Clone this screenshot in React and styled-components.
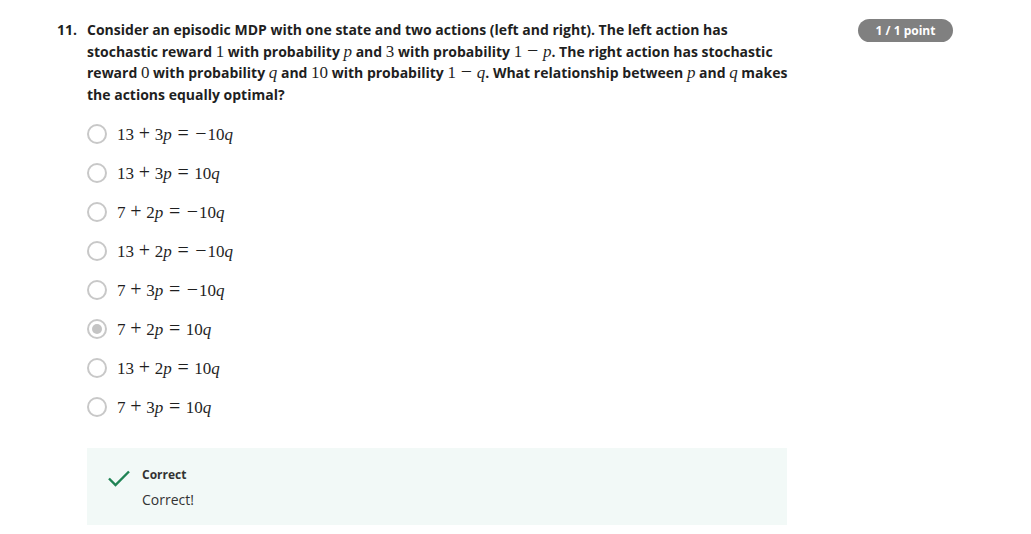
import React from 'react';
import styled, { createGlobalStyle } from 'styled-components';

const GlobalStyle = createGlobalStyle`
  body {
    margin: 0;
    background: #fff;
    font-family: 'Open Sans', 'Liberation Sans', sans-serif;
    color: #1f1f1f;
  }
`;

const Page = styled.div`
  display: flex;
  align-items: flex-start;
  padding: 18px 78px 0 57px;
`;

const Number = styled.div`
  width: 30px;
  flex-shrink: 0;
  font-size: 14px;
  font-weight: 700;
  line-height: 21.5px;
  padding-top: 1px;
`;

const Body = styled.div`
  width: 700px;
`;

const Prompt = styled.div`
  width: 708px;
  font-size: 14px;
  font-weight: 700;
  line-height: 21.5px;
  padding-top: 1px;
`;

// math pieces, KaTeX-like sizing on a serif face
const M = styled.span`
  font-family: 'Liberation Serif', 'DejaVu Serif', serif;
  font-weight: 400;
  font-size: 17px;
  line-height: 0;
  font-style: ${(p) => (p.$i ? 'italic' : 'normal')};
`;

const Op = styled.span`
  display: inline-block;
  width: 13.2px;
  text-align: center;
  font-family: 'Liberation Serif', 'DejaVu Serif', serif;
  font-weight: 400;
  font-size: 20px;
  line-height: 0;
  margin: 0 ${(p) => (p.$unary ? '0' : p.$rel ? '4.7px' : '3.8px')};
`;

const Options = styled.div`
  display: flex;
  flex-direction: column;
  gap: 19px;
  margin-top: 19px;
`;

const Option = styled.label`
  display: flex;
  align-items: center;
  gap: 10px;
  height: 20px;
`;

const Radio = styled.span`
  width: 16px;
  height: 16px;
  border-radius: 50%;
  border: 2px solid #c8c8c8;
  display: flex;
  align-items: center;
  justify-content: center;
  flex-shrink: 0;
  &::after {
    content: '';
    width: 10px;
    height: 10px;
    border-radius: 50%;
    background: ${(p) => (p.$checked ? '#c4c4c4' : 'transparent')};
  }
`;

const Equation = styled.span`
  display: flex;
  align-items: baseline;
  white-space: nowrap;
  line-height: 20px;
`;

const Feedback = styled.div`
  margin-top: 31px;
  background: #f2f9f7;
  display: flex;
  gap: 11px;
  padding: 18px 20px 15px 20px;
`;

const CheckIcon = styled.svg`
  width: 24px;
  height: 24px;
  flex-shrink: 0;
`;

const FeedbackText = styled.div`
  display: flex;
  flex-direction: column;
  gap: 6px;
`;

const FeedbackTitle = styled.div`
  font-size: 12px;
  font-weight: 700;
  line-height: 18px;
  color: #333;
`;

const FeedbackBody = styled.div`
  font-size: 14px;
  line-height: 20px;
  color: #333;
`;

const Badge = styled.div`
  margin: 1px 0 0 auto;
  background: #808080;
  color: #fff;
  font-size: 12px;
  font-weight: 700;
  height: 23px;
  width: 95px;
  border-radius: 12px;
  display: flex;
  align-items: center;
  justify-content: center;
  flex-shrink: 0;
`;

const options = [
  ['13', '3', '−10', false],
  ['13', '3', '10', false],
  ['7', '2', '−10', false],
  ['13', '2', '−10', false],
  ['7', '3', '−10', false],
  ['7', '2', '10', true],
  ['13', '2', '10', false],
  ['7', '3', '10', false],
];

const renderRhs = (rhs) =>
  rhs.startsWith('−') ? (
    <>
      <Op $unary>−</Op>
      <M>{rhs.slice(1)}</M>
    </>
  ) : (
    <M>{rhs}</M>
  );

const App = () => {
  return (
    <>
      <GlobalStyle />
      <Page>
        <Number>11.</Number>
        <Body>
          <Prompt>
            Consider an episodic MDP with one state and two actions (left and right). The left action has
            stochastic reward <M>1</M> with probability <M $i>p</M> and <M>3</M> with probability{' '}
            <M>1</M>
            <Op>−</Op>
            <M $i>p</M>. The right action has stochastic reward <M>0</M> with probability <M $i>q</M> and{' '}
            <M>10</M> with probability <M>1</M>
            <Op>−</Op>
            <M $i>q</M>. What relationship between <M $i>p</M> and <M $i>q</M> makes the actions equally
            optimal?
          </Prompt>
          <Options>
            {options.map(([a, b, rhs, checked], i) => (
              <Option key={i}>
                <Radio $checked={checked} />
                <Equation>
                  <M>{a}</M>
                  <Op>+</Op>
                  <M>{b}</M>
                  <M $i>p</M>
                  <Op $rel>=</Op>
                  {renderRhs(rhs)}
                  <M $i>q</M>
                </Equation>
              </Option>
            ))}
          </Options>
          <Feedback>
            <CheckIcon viewBox="0 0 24 24">
              <path d="M2 12.5l6.5 6.5L22 5.5" fill="none" stroke="#1f8354" strokeWidth="2.4" />
            </CheckIcon>
            <FeedbackText>
              <FeedbackTitle>Correct</FeedbackTitle>
              <FeedbackBody>Correct!</FeedbackBody>
            </FeedbackText>
          </Feedback>
        </Body>
        <Badge>1 / 1 point</Badge>
      </Page>
    </>
  );
};

export default App;
